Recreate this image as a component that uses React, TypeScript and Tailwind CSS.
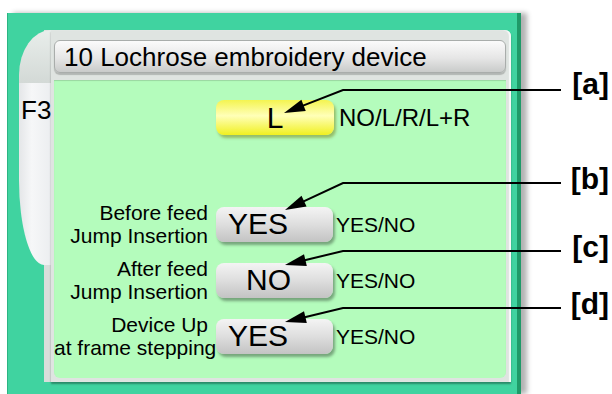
import React from "react";

interface Callout {
  label: string;
  labelTop: number;
  lineY: number;
  tipX: number;
  tipY: number;
}

interface ToggleRow {
  lines: string[];
  value: string;
  pad: string;
}

const callouts: Callout[] = [
  { label: "[a]", labelTop: 69, lineY: 90, tipX: 284, tipY: 113 },
  { label: "[b]", labelTop: 164, lineY: 183, tipX: 285, tipY: 210 },
  { label: "[c]", labelTop: 232, lineY: 251, tipX: 285, tipY: 265 },
  { label: "[d]", labelTop: 289, lineY: 308, tipX: 285, tipY: 322 },
];

const rows: ToggleRow[] = [
  { lines: ["Before feed", "Jump Insertion"], value: "YES", pad: "pl-[12px]" },
  { lines: ["After feed", "Jump Insertion"], value: "NO", pad: "pl-[30px]" },
  { lines: ["Device Up", "at frame stepping"], value: "YES", pad: "pl-[12px]" },
];

const Arrow: React.FC<{ c: Callout }> = ({ c }) => {
  const fromX = 343;
  const dx = c.tipX - fromX;
  const dy = c.tipY - c.lineY;
  const len = Math.sqrt(dx * dx + dy * dy);
  const ux = dx / len;
  const uy = dy / len;
  const headLen = 21;
  const headW = 6;
  const bx = c.tipX - ux * headLen;
  const by = c.tipY - uy * headLen;
  const nx = -uy;
  const ny = ux;
  const pts = `${c.tipX},${c.tipY} ${bx + nx * headW},${by + ny * headW} ${bx - nx * headW},${by - ny * headW}`;
  return (
    <g>
      <polyline
        points={`561,${c.lineY} ${fromX},${c.lineY} ${bx + ux * 4},${by + uy * 4}`}
        fill="none"
        stroke="#000"
        strokeWidth={2}
      />
      <polygon points={pts} fill="#000" />
    </g>
  );
};

export default function App() {
  return (
    <div className="relative w-[612px] h-[394px] overflow-hidden bg-white font-['Liberation_Sans',Arial,sans-serif] text-black">
      {/* device screen */}
      <div className="ml-[7px] mt-[13px] w-[514px] h-[381px] bg-[#40d3a0] border-l border-l-[#2bb583] border-r-[4px] border-r-[#1f9a68] shadow-[6px_0_5px_rgba(0,0,0,0.3)] pt-[17px] pl-[11px] flex">
        {/* tab */}
        <div className="w-[32px] h-[352px] flex flex-col bg-[linear-gradient(to_right,transparent_25px,#d8dedb_25px)]">
          <div className="h-[53px] bg-[linear-gradient(to_bottom,#e9eeeb,#d3d9d6)] rounded-tl-[32px_45px]" />
          <div className="h-[182px] bg-[linear-gradient(to_right,#e4e6e8,#f6f7f8_40%,#eceef0)] rounded-bl-[25px_85px] pt-[14px] pl-[2px] text-[26px] leading-none">
            F3
          </div>
        </div>

        {/* frame */}
        <div className="w-[460px] h-[352px] bg-[#dfe4e1] rounded-tr-[6px] shadow-[0_2px_2px_rgba(0,0,0,0.35),inset_-2px_0_1px_rgba(255,255,255,0.8)] pt-[10px] pl-[3px] pr-[5px] pb-[4px] flex flex-col">
          <div className="h-[33px] rounded-[6px] border border-[#a9adab] bg-[linear-gradient(to_bottom,#fbfbfb,#e6e6e6_55%,#c9cbca)] shadow-[0_2px_1px_rgba(0,0,0,0.2)] pl-[9px] flex items-center text-[26px] leading-none">
            10 Lochrose embroidery device
          </div>

          <div className="mt-[7px] h-[298px] bg-[#b4fcbc] rounded-b-[6px] shadow-[inset_0_1px_1px_rgba(0,0,0,0.15)] pt-[20px]">
            <div className="flex items-center pl-[162px]">
              <div className="w-[118px] h-[35px] rounded-[8px] bg-[linear-gradient(to_bottom,#f4f450,#ffffb8_45%,#f0f020)] shadow-[2px_3px_3px_rgba(110,110,0,0.45)] flex items-center justify-center text-[30px] leading-none">
                L
              </div>
              <span className="ml-[5px] text-[24px] leading-none">NO/L/R/L+R</span>
            </div>

            <div className="mt-[66px] flex flex-col gap-[10px]">
              {rows.map((r, i) => (
                <div key={i} className="flex items-center">
                  <div className="w-[154px] text-right text-[21px] leading-[23px] whitespace-nowrap">
                    {r.lines.map((l) => (
                      <div key={l}>{l}</div>
                    ))}
                  </div>
                  <div
                    className={`ml-[8px] w-[117px] h-[35px] rounded-[8px] bg-[linear-gradient(to_bottom,#f4f4f4,#dedede_50%,#c3c3c3)] shadow-[2px_3px_3px_rgba(0,0,0,0.35)] flex items-center text-[30px] leading-none ${r.pad}`}
                  >
                    {r.value}
                  </div>
                  <span className="ml-[3px] text-[21px] leading-none">YES/NO</span>
                </div>
              ))}
            </div>
          </div>
        </div>
      </div>

      {/* callouts */}
      <svg className="absolute left-0 top-0 pointer-events-none" width={612} height={394}>
        {callouts.map((c) => (
          <Arrow key={c.label} c={c} />
        ))}
      </svg>
      {callouts.map((c) => (
        <div
          key={c.label}
          className="absolute right-[3px] text-[30px] font-bold leading-none"
          style={{ top: c.labelTop }}
        >
          {c.label}
        </div>
      ))}
    </div>
  );
}
